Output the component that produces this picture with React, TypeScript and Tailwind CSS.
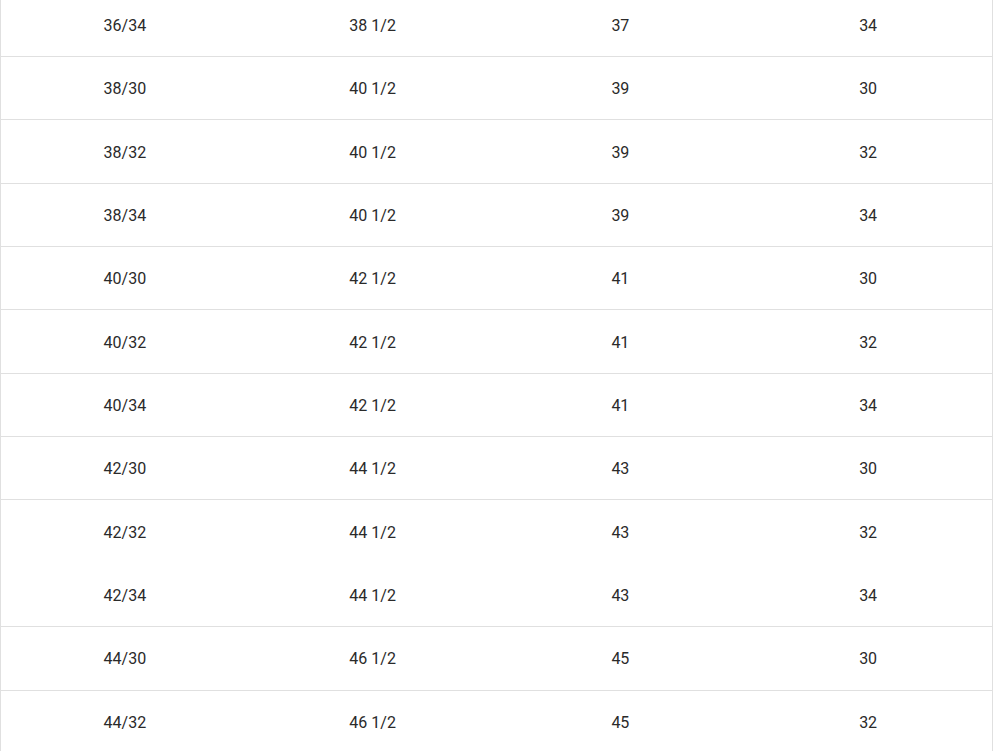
const rows: { size: string; a: string; b: string; c: string; noBorder?: boolean }[] = [
  { size: '36/34', a: '38 1/2', b: '37', c: '34' },
  { size: '38/30', a: '40 1/2', b: '39', c: '30' },
  { size: '38/32', a: '40 1/2', b: '39', c: '32' },
  { size: '38/34', a: '40 1/2', b: '39', c: '34' },
  { size: '40/30', a: '42 1/2', b: '41', c: '30' },
  { size: '40/32', a: '42 1/2', b: '41', c: '32' },
  { size: '40/34', a: '42 1/2', b: '41', c: '34' },
  { size: '42/30', a: '44 1/2', b: '43', c: '30' },
  { size: '42/32', a: '44 1/2', b: '43', c: '32', noBorder: true },
  { size: '42/34', a: '44 1/2', b: '43', c: '34' },
  { size: '44/30', a: '46 1/2', b: '45', c: '30' },
  { size: '44/32', a: '46 1/2', b: '45', c: '32' },
];

export default function App() {
  return (
    <div className="h-[751px] overflow-hidden bg-white font-['Roboto',sans-serif] text-[16px] text-[#2a2a2a]">
      {/* size table, scrolled part-way down */}
      <div className="-mt-[6.4px] w-[993px] border-x border-[#e0e0e0]">
        {rows.map((r, i) => (
          <div
            key={i}
            className={
              r.noBorder
                ? 'grid h-[63.37px] grid-cols-4 items-center pt-[2px] text-center'
                : 'grid h-[63.37px] grid-cols-4 items-center border-b border-[#e0e0e0] pt-[2px] text-center'
            }
          >
            <span>{r.size}</span>
            <span>{r.a}</span>
            <span>{r.b}</span>
            <span>{r.c}</span>
          </div>
        ))}
      </div>
    </div>
  );
}
